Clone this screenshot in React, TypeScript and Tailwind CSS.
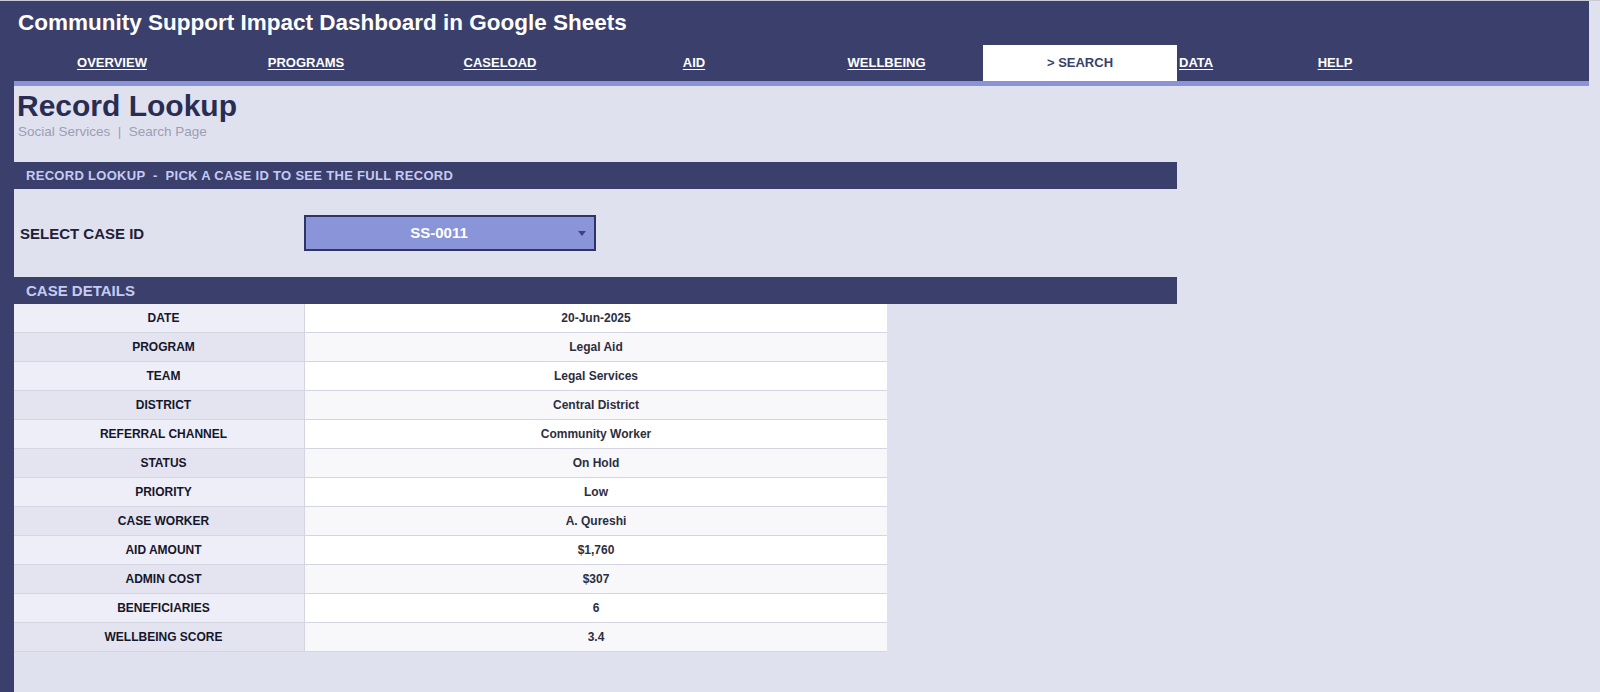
const navItems = [
  { label: "OVERVIEW", w: "w-[196px]" },
  { label: "PROGRAMS", w: "w-[192px]" },
  { label: "CASELOAD", w: "w-[196px]" },
  { label: "AID", w: "w-[192px]" },
  { label: "WELLBEING", w: "w-[193px]" },
];

const details: [string, string][] = [
  ["DATE", "20-Jun-2025"],
  ["PROGRAM", "Legal Aid"],
  ["TEAM", "Legal Services"],
  ["DISTRICT", "Central District"],
  ["REFERRAL CHANNEL", "Community Worker"],
  ["STATUS", "On Hold"],
  ["PRIORITY", "Low"],
  ["CASE WORKER", "A. Qureshi"],
  ["AID AMOUNT", "$1,760"],
  ["ADMIN COST", "$307"],
  ["BENEFICIARIES", "6"],
  ["WELLBEING SCORE", "3.4"],
];

export default function App() {
  return (
    <div className="w-[1600px] h-[692px] overflow-hidden bg-[#e0e1ef] font-['Liberation_Sans',Arial,sans-serif] border-t border-[#c9cad6] flex flex-col">
      {/* Header */}
      <div className="w-[1589px] h-[80px] bg-[#3b3f6b] flex flex-col shrink-0">
        <div className="h-[43px] leading-[43px] pl-[18px] text-[22.5px] font-bold text-white">
          Community Support Impact Dashboard in Google Sheets
        </div>
        <div className="h-[37px] flex pl-[14px] pt-[1px]">
          {navItems.map((n) => (
            <div key={n.label} className={`${n.w} flex items-center justify-center`}>
              <span className="text-[13px] font-bold text-white underline underline-offset-2">{n.label}</span>
            </div>
          ))}
          <div className="w-[194px] bg-white flex items-center justify-center">
            <span className="text-[13px] font-bold text-[#3b3f6b]">&gt; SEARCH</span>
          </div>
          <div className="w-[60px] flex items-center pl-[2px]">
            <span className="text-[13px] font-bold text-white underline underline-offset-2">DATA</span>
          </div>
          <div className="w-[196px] flex items-center justify-center">
            <span className="text-[13px] font-bold text-white underline underline-offset-2">HELP</span>
          </div>
        </div>
      </div>

      {/* Body */}
      <div className="flex flex-1">
        <div className="w-[14px] bg-[#3b3f6b] shrink-0" />
        <div className="flex flex-col">
          <div className="w-[1575px] h-[5px] bg-[#8a93d4]" />

          <div className="pl-[3px] pt-[3px] leading-[34px] text-[30px] font-bold text-[#2a2d52]">Record Lookup</div>
          <div className="pl-[4px] mt-[1px] leading-[16px] text-[13.5px] text-[#9c9eb2] whitespace-pre">
            Social Services  |  Search Page
          </div>

          <div className="mt-[22px] w-[1163px] h-[27px] bg-[#3b3f6b] pl-[12px] leading-[27px] text-[13px] tracking-[0.3px] font-bold text-[#c5cbf2] whitespace-pre">
            RECORD LOOKUP  -  PICK A CASE ID TO SEE THE FULL RECORD
          </div>

          <div className="h-[88px] flex items-center">
            <div className="w-[290px] pl-[6px] pt-[3px] text-[15px] font-bold text-[#1f2035]">SELECT CASE ID</div>
            <div className="relative w-[292px] h-[36px] border-2 border-[#2f3366] bg-[#8a94d8] flex items-center justify-center pr-[22px]">
              <span className="text-[15px] font-bold text-white">SS-0011</span>
              <svg className="absolute right-[8px] top-[14px]" width="8" height="5" viewBox="0 0 8 5">
                <path d="M0 0 L8 0 L4 5 Z" fill="#3d4380" />
              </svg>
            </div>
          </div>

          <div className="w-[1163px] h-[27px] bg-[#3b3f6b] pl-[12px] leading-[27px] text-[15px] font-bold text-[#c5cbf2]">
            CASE DETAILS
          </div>

          <div className="w-[873px] flex flex-col">
            {details.map(([label, value], i) => (
              <div key={label} className="flex h-[29px] border-b border-[#d3d5e0]">
                <div
                  className={`w-[291px] pl-[9px] border-r border-[#d3d5e0] flex items-center justify-center text-[12px] font-bold text-[#15162a] ${
                    i % 2 === 0 ? "bg-[#eeeef9]" : "bg-[#e3e4f0]"
                  }`}
                >
                  {label}
                </div>
                <div
                  className={`flex-1 flex items-center justify-center text-[12px] font-bold text-[#2d2e3e] ${
                    i % 2 === 0 ? "bg-white" : "bg-[#f8f8fb]"
                  }`}
                >
                  {value}
                </div>
              </div>
            ))}
          </div>
        </div>
      </div>
    </div>
  );
}
